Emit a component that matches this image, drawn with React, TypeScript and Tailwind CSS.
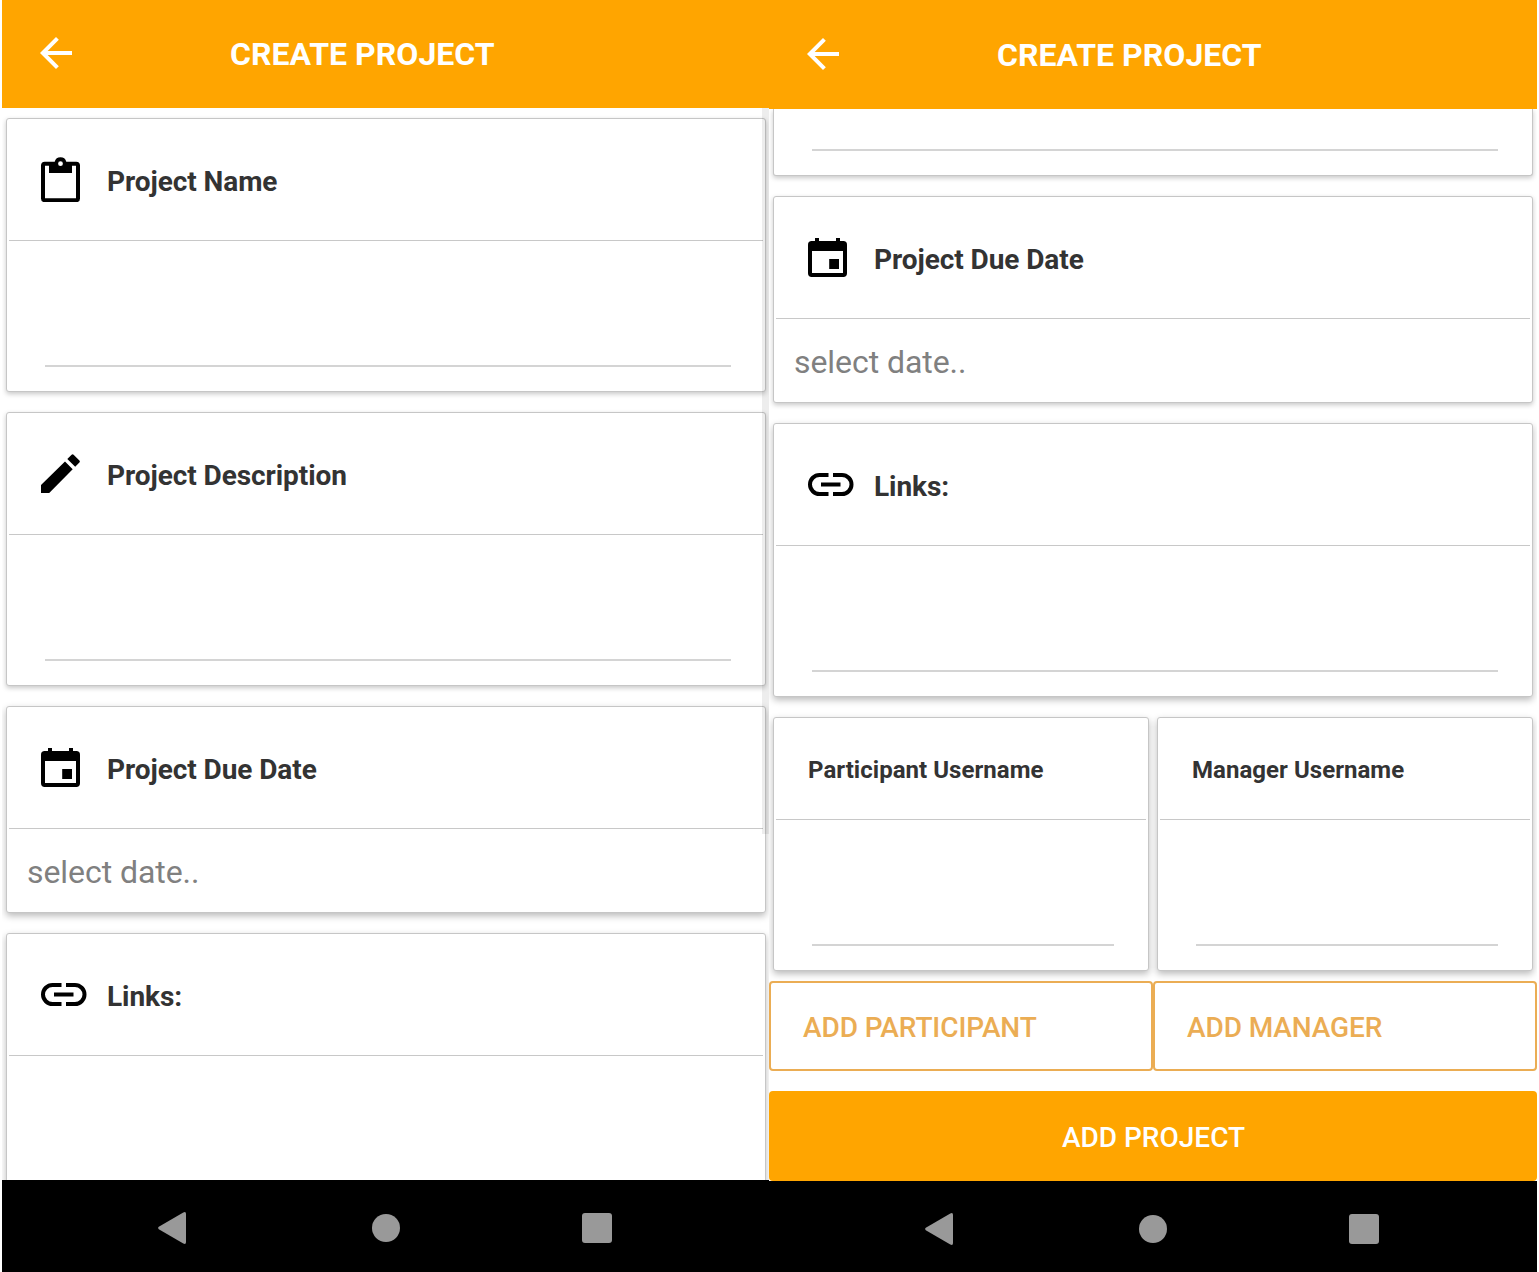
import React from "react";

function BackArrow() {
  return (
    <svg viewBox="0 0 24 24" className="ml-[30px] size-12 shrink-0 fill-white">
      <path d="M20 11H7.83l5.59-5.59L12 4l-8 8 8 8 1.41-1.41L7.83 13H20v-2z" />
    </svg>
  );
}

function ClipboardIcon() {
  return (
    <svg viewBox="0 0 39 45" className="mb-[1px] h-[45px] w-[39px]">
      <path
        fillRule="evenodd"
        d="M3.8 4.7H13.7A6 6 0 0 1 25.3 4.7H35.2A3.8 3.8 0 0 1 39 8.5V41.4A3.8 3.8 0 0 1 35.2 45.2H3.8A3.8 3.8 0 0 1 0 41.4V8.5A3.8 3.8 0 0 1 3.8 4.7ZM4 8.7V41.3H35V8.7H31V16H8V8.7ZM19.5 4.3A2.4 2.4 0 1 0 19.5 9.1A2.4 2.4 0 1 0 19.5 4.3Z"
      />
    </svg>
  );
}

function PencilIcon() {
  return (
    <svg viewBox="0 0 39 39" className="mb-px size-[39px]">
      <path d="M0 31V39H8.2L31.7 15.3L24 7.5ZM26.3 5.1L30.6 .8Q31.6-.2 32.6 .8L38.4 6.6Q39.3 7.6 38.4 8.6L34.2 12.8Z" />
    </svg>
  );
}

function CalendarIcon() {
  return (
    <svg viewBox="0 0 39 39" className="mb-px size-[39px]">
      <path
        fillRule="evenodd"
        d="M7 0H11V3H28V0H32V3H35.3A3.7 3.7 0 0 1 39 6.7V35.3A3.7 3.7 0 0 1 35.3 39H3.7A3.7 3.7 0 0 1 0 35.3V6.7A3.7 3.7 0 0 1 3.7 3H7ZM4 13V35H35V13ZM21.2 21H31V31H21.2Z"
      />
    </svg>
  );
}

function LinkIcon() {
  return (
    <svg viewBox="0 0 46 23" className="mb-px h-[23px] w-[46px]" fill="none" stroke="black" strokeWidth="4">
      <path d="M20.5 2H11.5a9.5 9.5 0 0 0 0 19H20.5M25 2H34a9.5 9.5 0 0 1 0 19H25M13 11.5H32.5" />
    </svg>
  );
}

const cardBox = "shrink-0 rounded-[3px] border border-[#c6c6c6] bg-white";
const shallow = " shadow-[0_2px_5px_rgba(0,0,0,0.22)]";
const deep = " shadow-[0_3px_7px_rgba(0,0,0,0.27)]";

function Card({
  icon,
  title,
  raised,
  children,
}: {
  icon: React.ReactNode;
  title: string;
  raised?: boolean;
  children: React.ReactNode;
}) {
  return (
    <section className={cardBox + (raised ? deep : shallow)}>
      <div className="mx-0.5 flex h-[122px] items-center border-b border-[#c8c8c8] pl-8">
        <div className="flex w-[66px] items-center">{icon}</div>
        <h2 className="mt-[5px] text-[28px] leading-8 font-bold tracking-[-0.07px]">{title}</h2>
      </div>
      {children}
    </section>
  );
}

function Field() {
  return (
    <div className="flex h-[150px] flex-col justify-end px-[38px] pb-6">
      <div className="mr-[-4px] h-0.5 bg-[#d4d4d4]" />
    </div>
  );
}

function SelectDate() {
  return (
    <div className="flex h-[83px] items-center pl-5 pt-0.5 text-[32px] tracking-[-0.06px] text-[#808080]">
      select date..
    </div>
  );
}

function UserCard({ title }: { title: string }) {
  return (
    <section className={cardBox + deep + " w-[376px]"}>
      <div className="mx-0.5 flex h-[102px] items-center border-b border-[#c8c8c8] pl-8 pt-0.5 text-2xl font-bold tracking-[0.04px]">
        {title}
      </div>
      <Field />
    </section>
  );
}

function Header({ tall }: { tall?: boolean }) {
  return (
    <header className={(tall ? "h-[109px] pt-px" : "h-[108px]") + " flex shrink-0 items-center bg-[#ffa500] pb-0.5"}>
      <BackArrow />
      <h1 className="mt-0.5 ml-[150px] text-[32px] leading-10 font-bold tracking-[0.04px] text-white">CREATE PROJECT</h1>
    </header>
  );
}

function NavBar({ short }: { short?: boolean }) {
  return (
    <nav className={(short ? "h-[91px]" : "h-[92px]") + " flex shrink-0 items-start bg-black pt-8"}>
      <svg viewBox="0 0 28 32" className="ml-[156px] h-8 w-7 fill-[#999]">
        <path d="M25.3 .5Q28-.8 28 2V30Q28 32.8 25.3 31.5L.8 17.2Q-.5 16 .8 14.8Z" />
      </svg>
      <div className="mt-0.5 ml-[186px] size-7 rounded-full bg-[#999]" />
      <div className="mt-px ml-[182px] size-[30px] rounded-[3px] bg-[#999]" />
    </nav>
  );
}

export default function App() {
  return (
    <div className="flex h-[1272px] w-[1539px] overflow-hidden bg-white pl-0.5 font-[Roboto,sans-serif] text-[#333]">
      <div className="relative flex w-[767px] flex-col">
        <Header />
        <main className="flex min-h-0 flex-1 flex-col gap-5 overflow-hidden pt-2.5 pr-[3px] pl-1">
          <Card icon={<ClipboardIcon />} title="Project Name">
            <Field />
          </Card>
          <Card icon={<PencilIcon />} title="Project Description">
            <Field />
          </Card>
          <Card icon={<CalendarIcon />} title="Project Due Date" raised>
            <SelectDate />
          </Card>
          <Card icon={<LinkIcon />} title="Links:" raised>
            <Field />
          </Card>
        </main>
        <div className="absolute top-[108px] right-0 h-[726px] w-[7px] bg-black/7" />
        <NavBar />
      </div>
      <div className="flex w-[768px] flex-col">
        <Header tall />
        <main className="flex min-h-0 flex-1 flex-col overflow-hidden">
          <div className="flex shrink-0 flex-col gap-5 px-1">
            <section className="flex h-[67px] shrink-0 flex-col justify-end rounded-b-[3px] border border-t-0 border-[#c6c6c6] bg-white pr-[34px] pb-6 pl-[38px] shadow-[0_2px_5px_rgba(0,0,0,0.22)]">
              <div className="h-0.5 bg-[#d4d4d4]" />
            </section>
            <Card icon={<CalendarIcon />} title="Project Due Date">
              <SelectDate />
            </Card>
            <Card icon={<LinkIcon />} title="Links:" raised>
              <Field />
            </Card>
            <div className="flex gap-2">
              <UserCard title="Participant Username" />
              <UserCard title="Manager Username" />
            </div>
          </div>
          <div className="relative mt-2.5 flex shrink-0 text-[28px] font-medium tracking-[-0.1px] text-[#ebad54]">
            <button className="h-[90px] w-1/2 rounded border-2 border-[#ebad54] bg-white pt-1 pl-8 text-left">
              ADD PARTICIPANT
            </button>
            <button className="h-[90px] w-1/2 rounded border-2 border-[#ebad54] bg-white pt-1 pl-8 text-left">
              ADD MANAGER
            </button>
          </div>
          <button className="mt-5 h-[90px] shrink-0 rounded bg-[#ffa500] pt-1 pl-px text-[28px] font-medium text-white">
            ADD PROJECT
          </button>
        </main>
        <NavBar short />
      </div>
    </div>
  );
}
